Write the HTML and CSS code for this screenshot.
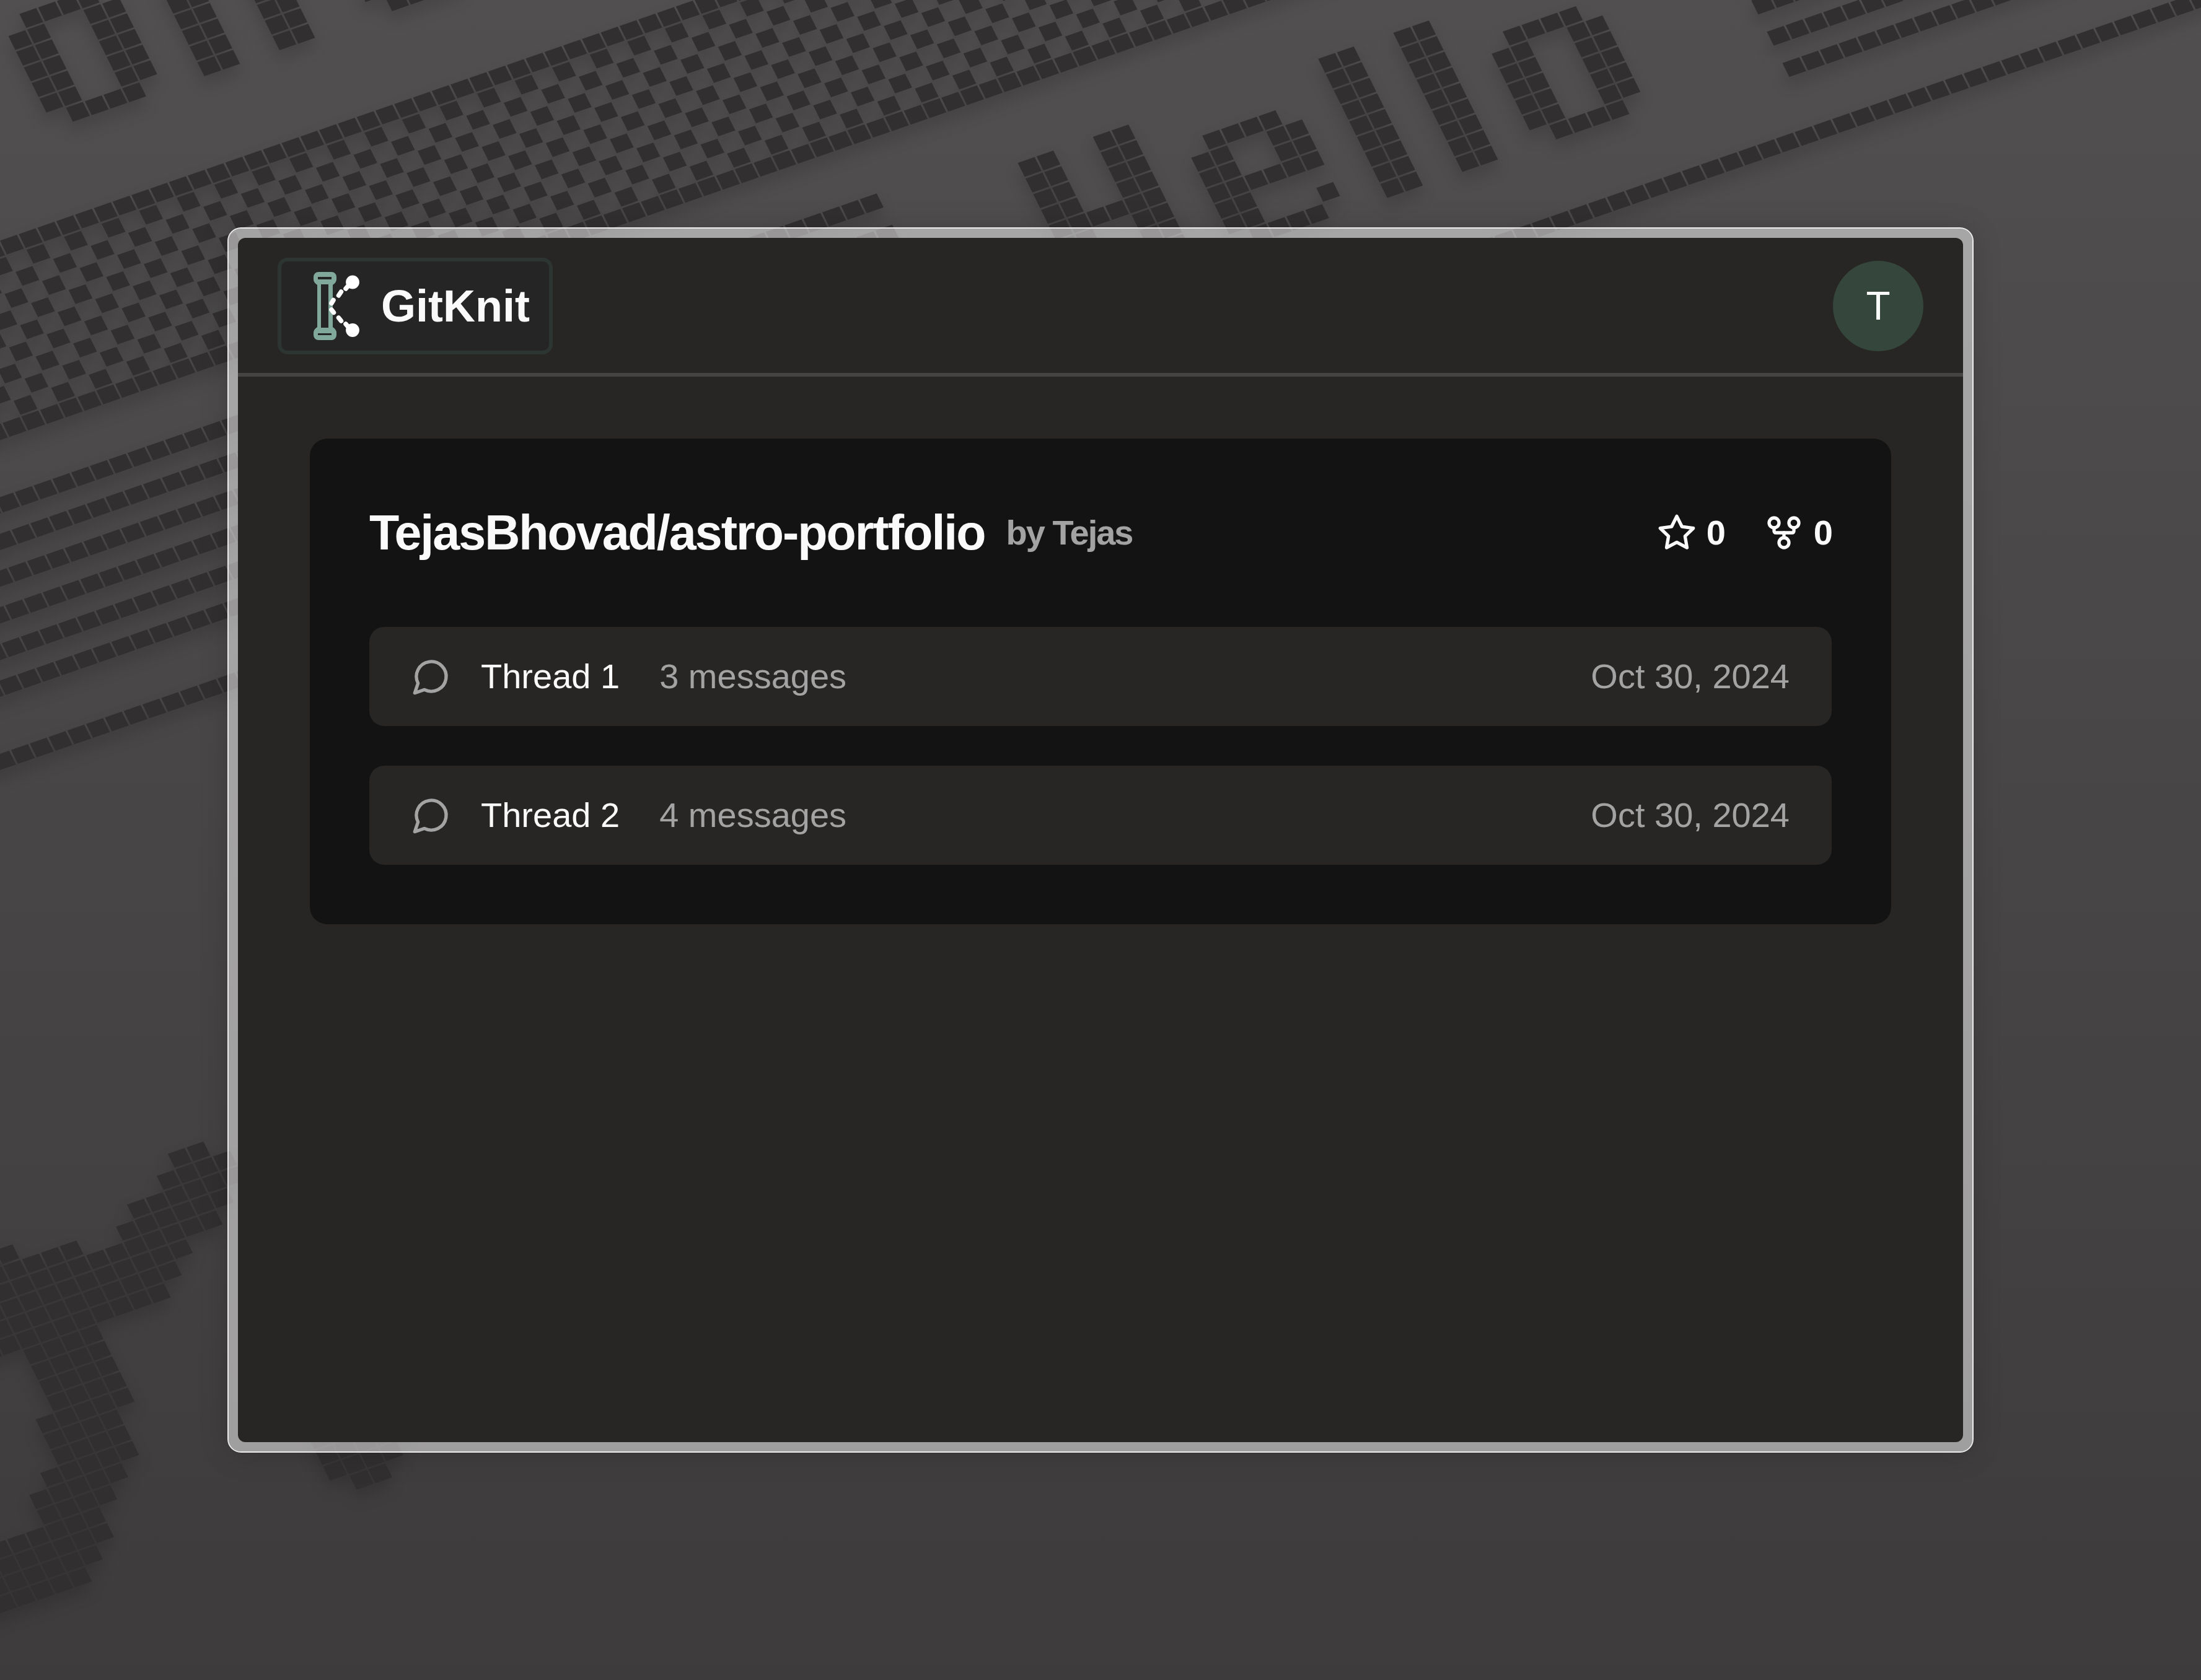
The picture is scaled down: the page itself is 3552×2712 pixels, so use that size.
FILE: index.html
```html
<!DOCTYPE html>
<html lang="en">
<head>
  <meta charset="utf-8">
  <meta name="viewport" content="width=device-width, initial-scale=1">
  <title>GitKnit</title>
  <link rel="stylesheet" href="styles.css">
</head>
<body class="desktop">
  <!-- Wallpaper: a slanted grid of tiles, one grid unit per tile -->
  <svg class="wallpaper" viewBox="0 0 3552 2712" preserveAspectRatio="xMinYMin slice" aria-hidden="true">
    <g class="wallpaper-shadow">
      <g transform="matrix(30.3 -10.5 12.54 25.24 29.6 805.5)">
        <!-- menu bar: borders, then checkered rows -->
        <path class="tiles" d="M-8-14h100M-8-4h110"/>
        <path class="tiles tiles-checker" d="M-8-13h110M-7-12h110M-8-11h110M-7-10h110M-8-9h110M-7-8h110M-8-7h110M-7-6h110M-8-5h110"/>
        <!-- window title bar stripes -->
        <path class="tiles" d="M-8 0h54M-8 2h54M-8 4h54M-8 6h54M-8 8h54M-8 10h54M90 4h36M90 6h36M90 8h36M90 10h36M-8 14h140"/>
        <!-- upper word -->
        <path class="tiles" d="M11-26h4M10-25h2M10-24h2M10-23h2M10-22h2M10-21h2M14-25h2M14-24h2M14-23h2M14-22h2M14-21h2M11-20h4
          M18-25h2M18-24h2M18-23h2M18-22h2M18-21h2M18-20h2M22-25h2M22-24h2M22-23h2M22-22h2M22-21h2M22-20h2
          M27-21h2M28-20h4"/>
        <!-- Hello -->
        <path class="tiles" d="M53 1h2M53 2h2M53 3h2M53 4h2M53 5h6M53 6h2M53 7h2M53 8h2M53 9h2M57 1h2M57 2h2M57 3h2M57 4h2M57 6h2M57 7h2M57 8h2M57 9h2
          M62 3h4M61 4h2M61 5h2M65 4h2M65 5h2M61 6h6M61 7h2M61 8h2M66 8h1M62 9h4
          M69 1h2M69 2h2M69 3h2M69 4h2M69 5h2M69 6h2M69 7h2M69 8h2M69 9h2
          M73 1h2M73 2h2M73 3h2M73 4h2M73 5h2M73 6h2M73 7h2M73 8h2M73 9h2
          M78 3h4M77 4h2M77 5h2M77 6h2M77 7h2M77 8h2M81 4h2M81 5h2M81 6h2M81 7h2M81 8h2M78 9h4"/>
        <!-- brush script stroke -->
        <path class="tiles" d="M-8 39h2M-9 40h4M-11 41h6M-12 42h6M-20 41h3M-20 42h6M-22 43h15M-22 44h13M-22 45h12M-22 46h11
          M-19 47h4M-19 48h4M-19 49h4M-19 50h4M-20 51h5M-20 52h4M-20 53h4M-21 54h5M-22 55h5M-22 56h4
          M-28 57h9M-28 58h9M-28 59h8M-28 60h7
          M-8 57h4M-8 58h5M-8 59h4M-7 60h2"/>
      </g>
    </g>
  </svg>

  <div class="frame">
    <div class="window">
      <header class="topbar">
        <a class="brand" href="#">
          <svg class="brand-mark" viewBox="0 0 74 110" aria-hidden="true">
            <path fill="#80a99c" fill-rule="evenodd" d="M8 0h21a8 8 0 0 1 8 8v4q0 5-6 9v68q6 4 6 9v4a8 8 0 0 1-8 8H8a8 8 0 0 1-8-8v-4q0-5 6-9V21q-6-4-6-9V8a8 8 0 0 1 8-8zM7 8v4h22V8zM12 20v70h12V20zM7 99v3h22v-3z"/>
            <g fill="#fff"><circle cx="63" cy="16.500" r="10.900"/><circle cx="63" cy="94" r="10.900"/></g>
            <path fill="none" stroke="#fff" stroke-width="7.500" stroke-linecap="round" d="M52 27l6-7M40.500 38l4-6M29 50.500l3-5M29 61l3.500 4.500M40.500 74l4 5M52 84l6 7"/>
          </svg>
          <span class="brand-name">GitKnit</span>
        </a>
        <button class="avatar" type="button" aria-label="Account">T</button>
      </header>

      <main class="content">
        <section class="repo">
          <div class="repo-head">
            <div class="repo-title">
              <h1 class="repo-name">TejasBhovad/astro-portfolio</h1>
              <span class="repo-owner">by Tejas</span>
            </div>
            <div class="stats">
              <span class="stat">
                <svg class="icon" viewBox="0 0 24 24" role="img" aria-label="Stars"><polygon points="12 2 15.090 8.260 22 9.270 17 14.140 18.180 21.020 12 17.770 5.820 21.020 7 14.140 2 9.270 8.910 8.260 12 2"/></svg>
                0
              </span>
              <span class="stat">
                <svg class="icon" viewBox="0 0 24 24" role="img" aria-label="Forks"><circle cx="12" cy="18" r="3"/><circle cx="6" cy="6" r="3"/><circle cx="18" cy="6" r="3"/><path d="M18 9v2c0 .6-.4 1-1 1H7c-.6 0-1-.4-1-1V9"/><path d="M12 12v3"/></svg>
                0
              </span>
            </div>
          </div>

          <div class="threads">
            <a class="thread" href="#">
              <svg class="icon thread-icon" viewBox="0 0 24 24" aria-hidden="true"><path d="M7.900 20A9 9 0 1 0 4 16.100L2 22Z"/></svg>
              <span class="thread-name">Thread 1</span>
              <span class="thread-count">3 messages</span>
              <time class="thread-date" datetime="2024-10-30">Oct 30, 2024</time>
            </a>
            <a class="thread" href="#">
              <svg class="icon thread-icon" viewBox="0 0 24 24" aria-hidden="true"><path d="M7.900 20A9 9 0 1 0 4 16.100L2 22Z"/></svg>
              <span class="thread-name">Thread 2</span>
              <span class="thread-count">4 messages</span>
              <time class="thread-date" datetime="2024-10-30">Oct 30, 2024</time>
            </a>
          </div>
        </section>
      </main>
    </div>
  </div>
</body>
</html>
```
FILE: styles.css
```css
* {
  box-sizing: border-box;
}

.desktop {
  display: flex;
  min-height: 100vh;
  margin: 0;
  padding: 367px;
  background: linear-gradient(#514f50, #3e3b3c);
  color: #fafafa;
  font-family: "Liberation Sans", Arial, sans-serif;
  font-size: 56px;
  line-height: 64px;
}

.wallpaper {
  position: absolute;
  inset: 0;
  width: 100%;
  height: 100%;
}

.wallpaper-shadow {
  filter: drop-shadow(0 14px 12px rgba(0, 0, 0, 0.16));
}

.tiles {
  fill: none;
  stroke: #322f30;
  stroke-width: 0.89;
  stroke-dasharray: 0.9 0.1;
}

.tiles-checker {
  stroke-dasharray: 0.9 1.1;
}

/* Translucent frame round the app window */
.frame {
  position: relative;
  display: flex;
  flex: 1;
  min-width: 0;
  padding: 15px;
  border: 2px solid rgba(255, 255, 255, 0.9);
  border-radius: 22px;
  background: rgba(255, 255, 255, 0.5);
  background-clip: padding-box;
  box-shadow: 0 4px 48px rgba(0, 0, 0, 0.16);
}

.window {
  display: flex;
  flex: 1;
  flex-direction: column;
  min-width: 0;
  overflow: hidden;
  border-radius: 12px;
  background: #272624;
}

.topbar {
  display: flex;
  align-items: center;
  justify-content: space-between;
  padding: 32px 64px 30px;
  border-bottom: 6px solid #454443;
}

.brand {
  display: flex;
  align-items: center;
  gap: 35px;
  height: 156px;
  padding: 0 31px 0 52px;
  border: 6px solid #2c3532;
  border-radius: 16px;
  background: #252525;
  color: inherit;
  font-size: 72px;
  font-weight: 700;
  text-decoration: none;
}

.brand-mark {
  width: 74px;
  height: 110px;
}

.avatar {
  width: 146px;
  height: 146px;
  padding: 0;
  border: 0;
  border-radius: 50%;
  background: #35463c;
  color: inherit;
  font: inherit;
  font-size: 64px;
}

.content {
  padding: 100px 116px;
}

.repo {
  padding: 96px;
  border-radius: 28px;
  background: #131313;
}

.repo-head {
  display: flex;
  align-items: center;
  justify-content: space-between;
  height: 112px;
  margin-bottom: 96px;
  font-weight: 700;
  letter-spacing: -2px;
}

.repo-title {
  display: flex;
  align-items: center;
  gap: 34px;
}

.repo-name {
  margin: 0;
  font-size: 79px;
  line-height: 80px;
}

.repo-owner {
  color: #a3a3a3;
}

.stats {
  display: flex;
  gap: 64px;
}

.stat {
  display: flex;
  align-items: center;
  gap: 16px;
}

.icon {
  width: 64px;
  height: 64px;
  fill: none;
  stroke: currentColor;
  stroke-width: 2;
  stroke-linecap: round;
  stroke-linejoin: round;
}

.threads {
  display: flex;
  flex-direction: column;
  gap: 64px;
}

.thread {
  display: flex;
  align-items: center;
  height: 160px;
  padding: 0 68px;
  border-radius: 24px;
  background: #272624;
  color: inherit;
  text-decoration: none;
}

.thread-icon {
  margin-right: 48px;
  color: #a3a3a3;
}

.thread-name {
  margin-right: 64px;
}

.thread-count {
  color: #a3a3a3;
}

.thread-date {
  margin-left: auto;
  color: #a3a3a3;
}
```
